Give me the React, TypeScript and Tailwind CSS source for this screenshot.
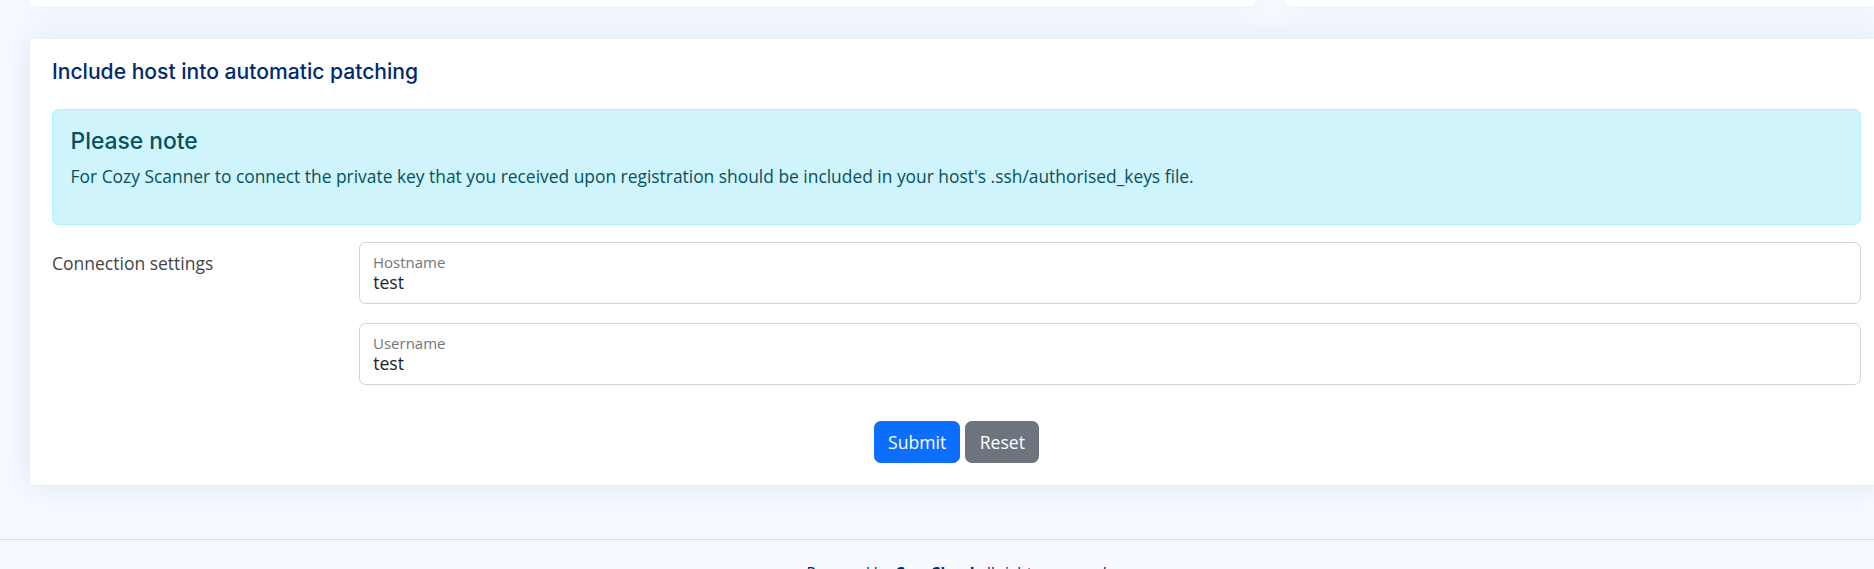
import React from "react";

const poppins = { fontFamily: "Inter, 'Noto Sans', sans-serif" };

export default function App() {
  return (
    <div
      className="w-[1874px] h-[569px] overflow-hidden bg-[#f6f9ff] text-[#444444]"
      style={{ fontFamily: "'Open Sans', 'Noto Sans', sans-serif" }}
    >
      <div className="w-[1913px]">
        <main className="px-[30px]">
          {/* previous cards row (only their bottom edges are visible) */}
          <div className="flex gap-[30px]">
            <div className="w-[1225px] h-[6px] bg-white rounded-b-[5px] shadow-[0_0_30px_rgba(1,41,112,0.1)]" />
            <div className="flex-1 h-[6px] bg-white rounded-b-[5px] shadow-[0_0_30px_rgba(1,41,112,0.1)]" />
          </div>

          {/* main card */}
          <section className="mt-[33px] bg-white rounded-[5px] shadow-[0_0_30px_rgba(1,41,112,0.1)] px-[22px] pb-[22px]">
            <h5
              className="pt-[21px] text-[21.1px] leading-[24px] font-medium text-[#012970]"
              style={poppins}
            >
              Include host into automatic patching
            </h5>

            <div className="mt-[25px] border border-[#b6effb] bg-[#cff4fc] text-[#055160] rounded-[6.6px] px-[17.6px] pt-[17.6px] pb-[17.6px]">
              <h4
                className="text-[22.8px] leading-[26.4px] font-medium mb-[8.8px]"
                style={poppins}
              >
                Please note
              </h4>
              <p className="text-[17.4px] leading-[26.4px] mb-[17.6px]">
                For Cozy Scanner to connect the private key that you received upon registration should be included in your host's .ssh/authorised_keys file.
              </p>
            </div>

            <div className="mt-[17px] flex">
              <div className="w-[307px] pt-[7.6px] text-[17.5px] leading-[26.4px]">
                Connection settings
              </div>
              <div className="flex-1 flex flex-col gap-[19px]">
                {[
                  { label: "Hostname", value: "test" },
                  { label: "Username", value: "test" },
                ].map((f) => (
                  <div key={f.label} className="relative">
                    <input
                      readOnly
                      defaultValue={f.value}
                      className="block w-full h-[62px] border border-[#ced4da] rounded-[6.6px] bg-white px-[13.2px] pt-[26px] pb-[8px] text-[17.6px] leading-[26px] text-[#212529] outline-none"
                    />
                    <span className="absolute left-[14px] top-[10px] text-[15px] leading-[20px] text-[#73767a]">
                      {f.label}
                    </span>
                  </div>
                ))}
              </div>
            </div>

            <div className="mt-[36px] flex justify-center gap-[5px]">
              <button className="h-[41.5px] px-[13.2px] rounded-[6.6px] bg-[#0d6efd] border border-[#0d6efd] text-white text-[17.6px] leading-[26.4px]">
                Submit
              </button>
              <button className="h-[41.5px] px-[13.2px] rounded-[6.6px] bg-[#6c757d] border border-[#6c757d] text-white text-[17.6px] leading-[26.4px]">
                Reset
              </button>
            </div>
          </section>
        </main>

        <footer className="mt-[54px] border-t border-[#cddfff] pt-[22px] text-center text-[15.4px] leading-[23px] text-[#012970]">
          Powered by <strong className="font-bold">CozyCloud</strong> all rights reserved
        </footer>
      </div>
    </div>
  );
}
